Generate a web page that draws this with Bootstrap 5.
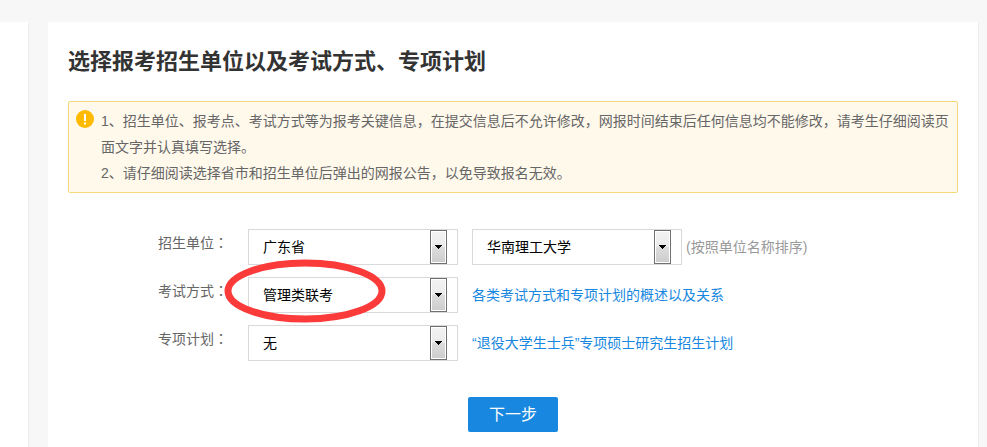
<!DOCTYPE html>
<html lang="zh-CN">
<head>
<meta charset="utf-8">
<meta name="viewport" content="width=device-width, initial-scale=1">
<title>选择报考招生单位以及考试方式、专项计划</title>
<link href="https://cdn.jsdelivr.net/npm/bootstrap@5.3.0/dist/css/bootstrap.min.css" rel="stylesheet">
<style>
body { background: #f7f7f7; color: #666; font: 14px/26px "Liberation Sans", "Noto Sans CJK SC", sans-serif; }
.page-shell { padding: 22px 9px 0 0; gap: 20px; }
.panel { background: #fff; box-shadow: 1px 1px 1px rgba(0, 0, 0, .04); }
.side-panel { width: 28px; }
.main-panel { padding: 25px 20px 15px; min-width: 0; }
.page-title { font-size: 22px; line-height: 30px; font-weight: 700; color: #333; margin-bottom: 24px; }
.notice { background: #fff9ec; border: 1px solid #f5d877; border-radius: 2px; padding: 6px 4px 6px 7px; gap: 7px; margin-bottom: 36px; }
.notice svg { margin-top: 2px; }
.fields { gap: 12px; padding-left: 90px; }
.field-name { width: 90px; line-height: 28px; }
.colon { font-family: "Noto Sans CJK TC", sans-serif; line-height: 1; }
.pair { column-gap: 14px; }
.picker {
  width: 210px; height: 36px; padding: 0 32px 0 14px; font-size: 14px; color: #000;
  border: 1px solid #d9d9d9; border-radius: 0;
  background: #fff url("data:image/svg+xml,%3Csvg xmlns='http://www.w3.org/2000/svg' width='17' height='34'%3E%3Cdefs%3E%3ClinearGradient id='g' x2='0' y2='1'%3E%3Cstop stop-color='%23f2f2f2'/%3E%3Cstop offset='.48' stop-color='%23ebebeb'/%3E%3Cstop offset='.5' stop-color='%23dddddd'/%3E%3Cstop offset='1' stop-color='%23cdcdcd'/%3E%3C/linearGradient%3E%3C/defs%3E%3Cpath fill='%23707070' d='M0 0h17v34H0z'/%3E%3Cpath fill='%23fff' d='M1 1h15v32H1z'/%3E%3Cpath fill='url(%23g)' d='M2 2h13v30H2z'/%3E%3Cpath d='M5 15h7v1h-1v1h-1v1H9v1H8v-1H7v-1H6v-1H5z'/%3E%3C/svg%3E") no-repeat right 10px top 0 / 17px 34px;
}
.hint { color: #999; margin-left: 4px; }
.help-link { color: #1787e0; }
.highlight-ring { left: -24px; top: -18px; pointer-events: none; }
.next-btn { width: 90px; height: 35px; margin-top: 36px; padding: 0; font-size: 16px; line-height: 24px; color: #fff; background: #1787e0; border: 0; border-radius: 2px; }
.next-btn:hover { color: #fff; background: #0f76c8; }
</style>
</head>
<body>
<div class="page-shell d-flex min-vh-100">
  <aside class="side-panel panel flex-shrink-0"></aside>
  <main class="main-panel panel flex-grow-1">
    <h1 class="page-title">选择报考招生单位以及考试方式、专项计划</h1>
    <div class="notice d-flex align-items-start">
      <svg class="flex-shrink-0" width="18" height="18" viewBox="0 0 18 18" aria-hidden="true">
        <circle cx="9" cy="9" r="9" fill="#ffba00"/>
        <path d="M8 4h2v7H8zM8 12.5h2v2H8z" fill="#fff"/>
      </svg>
      <div>
        <p class="mb-0">1、招生单位、报考点、考试方式等为报考关键信息，在提交信息后不允许修改，网报时间结束后任何信息均不能修改，请考生仔细阅读页面文字并认真填写选择。</p>
        <p class="mb-0">2、请仔细阅读选择省市和招生单位后弹出的网报公告，以免导致报名无效。</p>
      </div>
    </div>
    <form>
      <div class="fields d-flex flex-column">
        <div class="d-flex align-items-start">
          <label class="field-name flex-shrink-0" for="province">招生单位<span class="colon" lang="zh-TW">：</span></label>
          <div class="pair d-flex flex-wrap align-items-center">
            <select class="picker form-select" id="province"><option>广东省</option></select>
            <div class="d-flex align-items-center">
              <select class="picker form-select" id="school" aria-label="招生单位名称"><option>华南理工大学</option></select>
              <span class="hint">(按照单位名称排序)</span>
            </div>
          </div>
        </div>
        <div class="d-flex align-items-start">
          <label class="field-name flex-shrink-0" for="exam">考试方式<span class="colon" lang="zh-TW">：</span></label>
          <div class="pair d-flex flex-wrap align-items-center">
            <div class="position-relative">
              <select class="picker form-select" id="exam"><option>管理类联考</option></select>
              <svg class="highlight-ring position-absolute" width="162" height="64" viewBox="0 0 162 64" aria-hidden="true">
                <ellipse cx="81" cy="32" rx="77" ry="28" fill="none" stroke="#fb3a3a" stroke-width="7"/>
              </svg>
            </div>
            <a class="help-link text-decoration-none" href="#">各类考试方式和专项计划的概述以及关系</a>
          </div>
        </div>
        <div class="d-flex align-items-start">
          <label class="field-name flex-shrink-0" for="plan">专项计划<span class="colon" lang="zh-TW">：</span></label>
          <div class="pair d-flex flex-wrap align-items-center">
            <select class="picker form-select" id="plan"><option>无</option></select>
            <a class="help-link text-decoration-none" href="#">“退役大学生士兵”专项硕士研究生招生计划</a>
          </div>
        </div>
      </div>
      <div class="text-center">
        <button class="next-btn btn" type="button">下一步</button>
      </div>
    </form>
  </main>
</div>
<script src="https://cdn.jsdelivr.net/npm/bootstrap@5.3.0/dist/js/bootstrap.bundle.min.js"></script>
</body>
</html>
